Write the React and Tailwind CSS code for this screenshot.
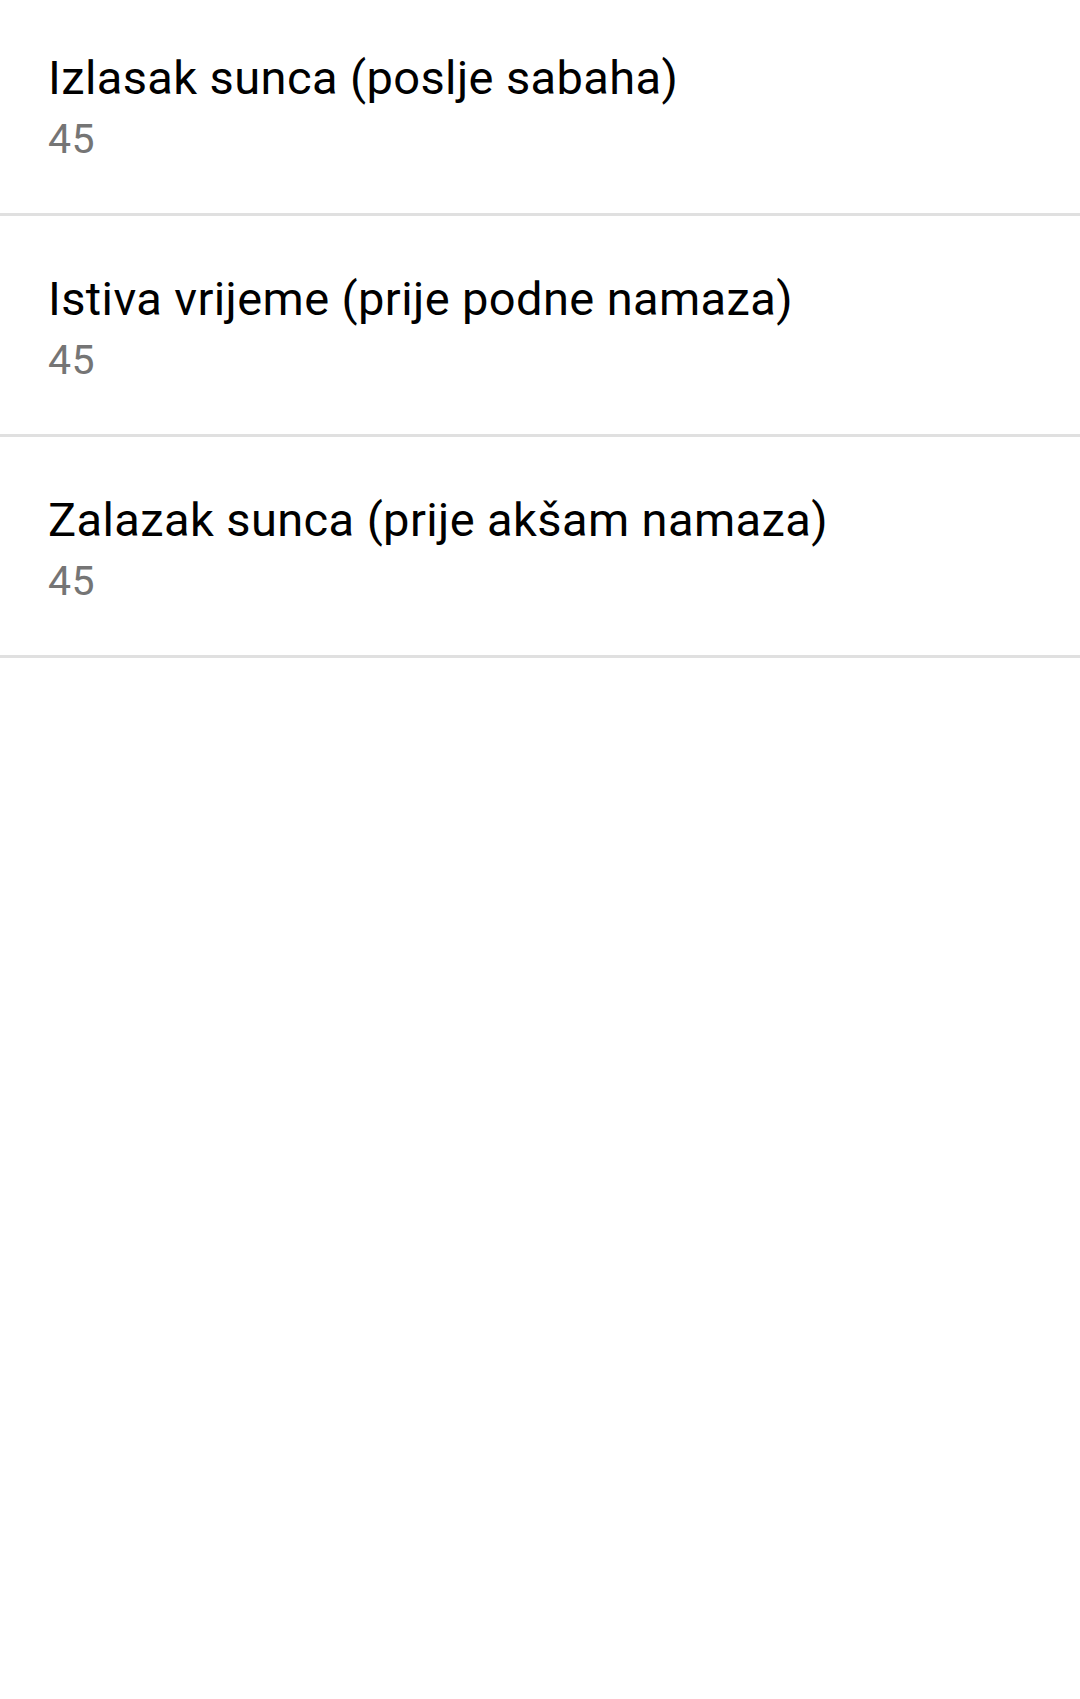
const rows = [
  { title: 'Izlasak sunca (poslje sabaha)', value: '45' },
  { title: 'Istiva vrijeme (prije podne namaza)', value: '45' },
  { title: 'Zalazak sunca (prije akšam namaza)', value: '45' },
];

function PrefRow({ title, value }) {
  return (
    <div className="border-b-[3px] border-[#e0e0e0]">
      <div className="pl-[48px] pr-[48px] pt-[55px] pb-[50px]">
        <div className="text-[47px] leading-[56px] tracking-[0.4px] text-black">{title}</div>
        <div className="mt-[9px] text-[41px] leading-[48px] tracking-[0.5px] text-[#757575]">{value}</div>
      </div>
    </div>
  );
}

export default function App() {
  return (
    <div
      className="w-[1080px] h-[1699px] overflow-hidden bg-white"
      style={{ fontFamily: 'Roboto, "Noto Sans", sans-serif' }}
    >
      <div className="-mt-[5px]">
        {rows.map(row => (
          <PrefRow key={row.title} title={row.title} value={row.value} />
        ))}
      </div>
    </div>
  );
}
